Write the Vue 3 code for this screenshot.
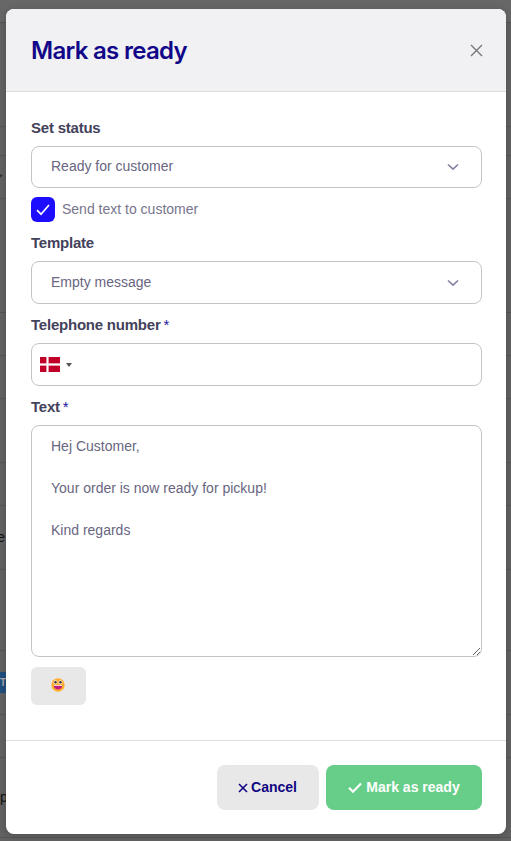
<script setup>
import { ref } from 'vue'

const sendText = ref(true)
const message = ref('Hej Customer,\n\nYour order is now ready for pickup!\n\nKind regards')
const rows = [
  { h: 23 }, { h: 104 }, { h: 29 }, { h: 43, text: '▾', kind: 'caret' }, { h: 114 }, { h: 43 }, { h: 43 },
  { h: 64 }, { h: 43 }, { h: 64, text: 'e', kind: 'tail' }, { h: 81 }, { h: 64, text: 'T', kind: 'badge' },
  { h: 43 }, { h: 80, text: 'p', kind: 'letter' }, { h: 4 }
]
</script>

<template>
  <div class="page">
    <div class="backdrop">
      <div v-for="(row, i) in rows" :key="i" class="row" :style="{ height: row.h + 'px' }">
        <span v-if="row.text" :class="row.kind">{{ row.text }}</span>
      </div>
    </div>
    <section class="modal">
      <header class="head">
        <h1>Mark as ready</h1>
        <button class="close" aria-label="Close">
          <svg width="13" height="13" viewBox="0 0 13 13"><path d="M1 1L12 12M12 1L1 12" fill="none" stroke="#77777b" stroke-width="1.35" /></svg>
        </button>
      </header>
      <div class="body">
        <label class="label first">Set status</label>
        <div class="field select one">
          <span>Ready for customer</span>
          <svg width="12" height="8" viewBox="0 0 12 8"><path d="M1 1.5L6 6.2L11 1.5" fill="none" stroke="#8583a2" stroke-width="1.7" /></svg>
        </div>
        <div class="check" @click="sendText = !sendText">
          <span class="box"><svg v-if="sendText" width="14" height="12" viewBox="0 0 14 12"><path d="M1 6.2L5 10.2L13 1" fill="none" stroke="#fff" stroke-width="1.7" /></svg></span>
          <span class="check-text">Send text to customer</span>
        </div>
        <label class="label">Template</label>
        <div class="field select">
          <span>Empty message</span>
          <svg width="12" height="8" viewBox="0 0 12 8"><path d="M1 1.5L6 6.2L11 1.5" fill="none" stroke="#8583a2" stroke-width="1.7" /></svg>
        </div>
        <label class="label">Telephone number<b>*</b></label>
        <div class="field phone">
          <svg width="20" height="15" viewBox="0 0 20 15"><path fill="#c00029" d="M0 0h20v15H0z" /><path d="M7.5 0v15M0 7.5h20" stroke="#f3d3da" stroke-width="2.4" /><path d="M7.5 0v15M0 7.5h20" stroke="#fff" stroke-width="1" /></svg>
          <i class="arrow"></i>
        </div>
        <label class="label">Text<b>*</b></label>
        <textarea v-model="message" class="area" spellcheck="false"></textarea>
        <button class="emoji" aria-label="Emoji">
          <svg width="14" height="14" viewBox="0 0 14 14"><circle cx="7" cy="7" r="6.7" fill="#ffae32" /><ellipse cx="4.5" cy="4.3" rx="1.9" ry="2.1" fill="#fff0d0" /><ellipse cx="9.5" cy="4.3" rx="1.9" ry="2.1" fill="#fff0d0" /><circle cx="4.5" cy="4.3" r="1.2" fill="#383039" /><circle cx="9.5" cy="4.3" r="1.2" fill="#383039" /><path d="M2.8 7.4h8.4c0 5.4-8.4 5.4-8.4 0z" fill="#c01c7c" /><path d="M3 7h8v.7H3z" fill="#fff" /></svg>
        </button>
      </div>
      <footer class="foot">
        <button class="btn cancel">
          <svg width="10" height="10" viewBox="0 0 10 10"><path d="M1 1L9 9M9 1L1 9" fill="none" stroke="#110782" stroke-width="1.6" /></svg>
          <span>Cancel</span>
        </button>
        <button class="btn ready">
          <svg width="14" height="12" viewBox="0 0 14 12"><path d="M1 5.8L5 9.8L13 1.5" fill="none" stroke="#fff" stroke-width="2.2" /></svg>
          <span>Mark as ready</span>
        </button>
      </footer>
    </section>
  </div>
</template>

<style>
body { overflow: hidden; }
</style>
<style scoped>
* { box-sizing: border-box; }
.page { display: grid; width: 511px; height: 841px; overflow: hidden; background: #626262; font-family: "Liberation Sans", Arial, sans-serif; }
.backdrop, .modal { grid-area: 1 / 1; }
.backdrop { background: linear-gradient(#676767 0, #676767 22px, #626262 23px); }
.row { display: flex; align-items: center; border-bottom: 1px solid #555; font-size: 14px; color: #111; width: 511px; white-space: nowrap; }
.row span { width: 6px; }
.row .tail { direction: rtl; padding-right: 1px; padding-bottom: 2px; }
.row .letter { padding-bottom: 2px; }
.row .badge { height: 21px; line-height: 21px; background: #214f7f; color: #aaa; font-size: 10px; font-weight: bold; }
.row .caret { font-size: 7px; color: #333; width: 3px; direction: rtl; padding-bottom: 2px; }
.modal { width: 500px; height: 825px; margin: 9px 0 0 6px; background: #fff; border-radius: 8px; overflow: hidden; box-shadow: 0 2px 9px #0003; display: flex; flex-direction: column; }
.head { height: 83px; flex: none; display: flex; align-items: center; justify-content: space-between; padding: 0 23px 0 25px; background: #f1f1f4; border-bottom: 1px solid #dddddf; }
h1 { margin: 0; padding-top: 1px; font: 600 24px/30px Inter, sans-serif; letter-spacing: -.7px; color: #110788; }
button { border: 0; padding: 0; font-family: inherit; }
.close { background: none; display: flex; }
.body { flex: 1; padding: 25px 24px 0 25px; display: flex; flex-direction: column; }
.label { height: 39px; padding-top: 11px; font-weight: 700; font-size: 15px; letter-spacing: -.22px; line-height: 20px; color: #43425b; flex: none; }
.label.first { height: 29px; padding-top: 1px; }
.label b { margin-left: 3px; color: #20149c; font-weight: 400; }
.field { height: 43px; flex: none; display: flex; align-items: center; border: 1px solid #c4c4c7; border-radius: 8px; background: #fff; font-size: 14px; color: #686681; }
.field.one { height: 42px; }
.select { justify-content: space-between; padding: 0 22px 0 19px; }
.select span, .check-text, .btn span { padding-bottom: 2px; }
.check { display: flex; align-items: center; height: 25px; margin-top: 9px; font-size: 14px; color: #77758c; gap: 7px; }
.box { width: 24px; height: 25px; border-radius: 6px; background: #1d0dff; display: grid; place-items: center; }
.phone { padding-left: 8px; gap: 6px; }
.arrow { border: solid transparent; border-width: 4px 3px 0; border-top-color: #555; }
.area { display: block; flex: none; width: 100%; height: 232px; margin: 0; padding: 10px 19px; border: 1px solid #c4c4c7; border-radius: 8px; outline: 0; font: 14px/21px "Liberation Sans", Arial, sans-serif; color: #686681; resize: vertical; }
.emoji { width: 55px; height: 38px; margin-top: 10px; padding: 0 2px 2px 0; border-radius: 6px; background: #e8e8e8; display: grid; place-items: center; }
.foot { height: 94px; flex: none; border-top: 1px solid #dedee0; padding: 24px 24px 0; display: flex; justify-content: flex-end; gap: 7px; }
.btn { height: 45px; display: flex; align-items: center; justify-content: center; border-radius: 8px; font-size: 14px; font-weight: 700; }
.cancel { width: 102px; padding-right: 1px; color: #110782; background: #e8e8e8; gap: 3px; }
.ready { width: 156px; color: #fff; background: #66ce88; gap: 4px; }
</style>
